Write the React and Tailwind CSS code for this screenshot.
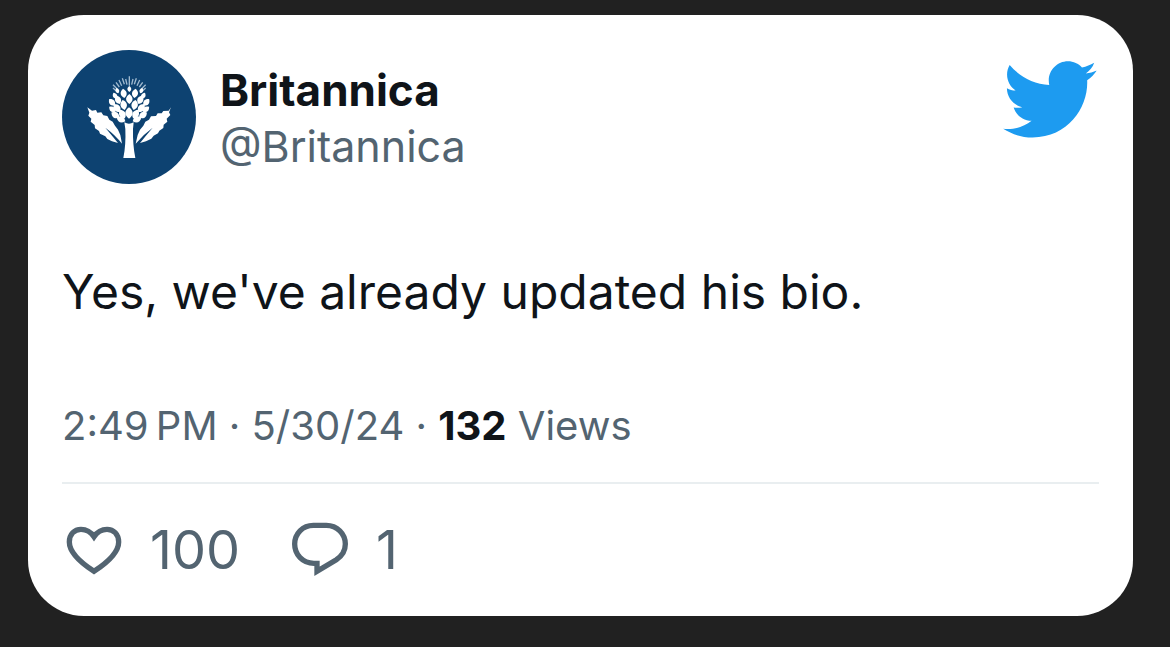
import React from "react";

const post = {
  name: "Britannica",
  handle: "@Britannica",
  text: "Yes, we've already updated his bio.",
  time: "2:49\u2009PM",
  date: "5/30/24",
  views: 132,
  likes: 100,
  replies: 1,
};

// [x, y, angle, length] of every scale on the thistle head
const scales = [
  [224, 142, 0, 18],
  [207, 155, -8, 28],
  [241, 155, 8, 28],
  [188, 147, -20, 17],
  [260, 147, 20, 17],
  [181, 162, -28, 20],
  [266, 162, 28, 20],
  [190, 174, -24, 28],
  [224, 172, 0, 30],
  [257, 174, 24, 28],
  [172, 182, -40, 26],
  [275, 182, 40, 26],
  [207, 190, -12, 30],
  [240, 190, 12, 30],
  [187, 199, -36, 30],
  [260, 199, 36, 30],
  [173, 203, -52, 24],
  [274, 203, 52, 24],
  [223, 214, 0, 34],
  [203, 217, -30, 30],
  [243, 217, 30, 30],
  [182, 220, -56, 28],
  [265, 220, 56, 28],
  [199, 233, -66, 28],
  [247, 233, 66, 28],
];

function ThistleAvatar() {
  return (
    <svg
      viewBox="22 25 402 402"
      className="size-[134px] shrink-0"
      role="img"
      aria-label="Britannica"
    >
      <circle cx="223" cy="226" r="201" fill="#0d4271" />
      <g stroke="#9fb9cf" strokeWidth="4">
        <path d="M175 139l9 8M175 129l12 12M184 122l10 14M193 115l8 17M203 110l6 18M213 112l4 17M224 104v28M235 112l-4 17M245 110l-6 18M255 115l-8 17M264 122l-10 14M273 129l-12 12M273 139l-9 8" />
      </g>
      <g fill="#fff">
        {scales.map(([x, y, angle, length]) => (
          <path
            key={`${x}-${y}`}
            d="M0-.5C.42-.2.44.2 0 .5C-.44.2-.42-.2 0-.5Z"
            transform={`translate(${x} ${y}) rotate(${angle}) scale(${length})`}
          />
        ))}
        <path d="M209 242Q223 250 237 242L235 262Q234 310 242 349H206Q214 310 212 262Z" />
        <path d="M98 197L112 207L124 205L128 213L140 212L146 221L158 223L164 234L174 240L181 252L190 264L197 280L202 306Q182 280 152 258Q174 284 190 304L172 299L158 292L152 284L136 276L133 268L121 260L120 250L108 240L110 231L101 222L104 213Z" />
        <path d="M349 197L342 207L326 208L321 215L309 215L304 223L289 224L283 234L272 240L266 252L256 264L249 280L243 306Q264 280 294 258Q272 284 256 304L274 299L290 291L297 282L310 275L314 267L326 259L327 249L338 240L336 231L347 220L343 212Z" />
      </g>
    </svg>
  );
}

function BirdLogo() {
  return (
    <svg
      viewBox="0.9 2.7 22.8 18.6"
      className="mt-[11px] mr-0.5 h-[77px] w-[94px] shrink-0 fill-[#1d9bf0]"
      role="img"
      aria-label="Twitter"
    >
      <path d="M23.643 4.937c-.835.37-1.732.62-2.675.733.962-.576 1.7-1.49 2.048-2.578-.9.534-1.897.922-2.958 1.13-.85-.904-2.06-1.47-3.4-1.47-2.572 0-4.658 2.086-4.658 4.66 0 .364.042.718.12 1.06-3.873-.195-7.304-2.05-9.602-4.868-.4.69-.63 1.49-.63 2.342 0 1.616.823 3.043 2.072 3.878-.764-.025-1.482-.234-2.11-.583v.06c0 2.257 1.605 4.14 3.737 4.568-.392.106-.803.162-1.227.162-.3 0-.593-.028-.877-.082.593 1.85 2.313 3.198 4.352 3.234-1.595 1.25-3.604 1.995-5.786 1.995-.376 0-.747-.022-1.112-.065 2.062 1.323 4.51 2.093 7.14 2.093 8.57 0 13.255-7.098 13.255-13.254 0-.2-.005-.402-.014-.602.91-.658 1.7-1.477 2.323-2.41z" />
    </svg>
  );
}

function HeartIcon() {
  return (
    <svg
      viewBox="36 36 168 168"
      className="size-14"
      fill="none"
      stroke="currentColor"
      strokeWidth="16"
      aria-hidden="true"
    >
      <path d="M120 184C80 158 46 126 46 96C46 73 61 58 81 58C98 58 110 65 120 80C130 65 142 58 159 58C179 58 194 73 194 96C194 126 160 158 120 184Z" />
    </svg>
  );
}

function ReplyIcon() {
  return (
    <svg
      viewBox="720 36 168 168"
      className="size-14"
      fill="none"
      stroke="currentColor"
      strokeWidth="16"
      aria-hidden="true"
    >
      <path d="M784 46H823C855 46 880 71 880 102C880 122 870 138 853 149L795 184V160H786C752 160 728 134 728 102C728 71 752 46 784 46Z" />
    </svg>
  );
}

function Action({ icon, count, label }) {
  return (
    <button
      type="button"
      aria-label={`${count} ${label}`}
      className="flex cursor-pointer items-center gap-7 text-[54px] leading-14"
    >
      {icon}
      <span>{count}</span>
    </button>
  );
}

function App() {
  return (
    <main className="min-h-screen bg-[#212121] pt-[15px] pr-[37px] pb-[31px] pl-7 font-['Inter',sans-serif] text-[#536471]">
      <article className="rounded-[56px] bg-white px-[34px] pt-[35px] pb-[38px]">
        <header className="flex items-start gap-6">
          <ThistleAvatar />
          <div className="grow pt-3 leading-14">
            <h1 className="text-[44px] leading-14 font-bold text-[#0f1419]">{post.name}</h1>
            <a href="#profile" className="text-[43px] leading-14">
              {post.handle}
            </a>
          </div>
          <BirdLogo />
        </header>

        <p className="mt-[76px] text-5xl leading-16 text-[#0f1419]">{post.text}</p>

        <p className="mt-[74px] text-[40px] leading-14">
          <time>
            {post.time} · {post.date}
          </time>{" "}
          · <strong className="font-bold text-[#0f1419]">{post.views}</strong> Views
        </p>

        <div className="mt-7 flex gap-[52px] border-t-2 border-[#e9eef0] pt-[38px] pl-1">
          <Action icon={<HeartIcon />} count={post.likes} label="likes" />
          <Action icon={<ReplyIcon />} count={post.replies} label="replies" />
        </div>
      </article>
    </main>
  );
}

export default App;
